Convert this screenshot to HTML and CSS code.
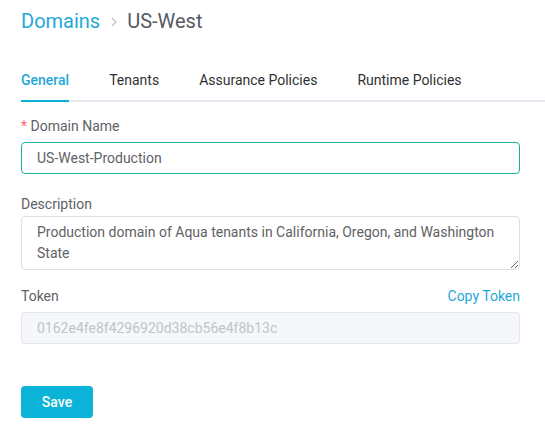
FILE: index.html
```html
<!DOCTYPE html>
<html>
<head>
<meta charset="utf-8">
<link rel="stylesheet" href="styles.css">
</head>
<body>
<div class="page">
  <div class="crumbs">
    <span class="crumb-link">Domains</span>
    <svg class="chev" width="8" height="12" viewBox="0 0 8 12"><path d="M2 2 L6 6 L2 10" fill="none" stroke="#c0c4cc" stroke-width="1.3"/></svg>
    <span class="crumb-cur">US-West</span>
  </div>
  <div class="tabs">
    <div class="tab active">General</div>
    <div class="tab">Tenants</div>
    <div class="tab">Assurance Policies</div>
    <div class="tab">Runtime Policies</div>
  </div>
  <div class="form">
    <div class="field">
      <div class="label"><span class="req">*</span> Domain Name</div>
      <div class="input focus">US-West-Production</div>
    </div>
    <div class="field desc">
      <div class="label tight">Description</div>
      <textarea class="textarea">Production domain of Aqua tenants in California, Oregon, and Washington State</textarea>
    </div>
    <div class="field">
      <div class="label row"><span>Token</span><span class="link">Copy Token</span></div>
      <div class="input disabled">0162e4fe8f4296920d38cb56e4f8b13c</div>
    </div>
    <div class="actions">
      <button class="btn">Save</button>
    </div>
  </div>
</div>
</body>
</html>
```
FILE: styles.css
```css
* { box-sizing: border-box; }
html, body { margin: 0; padding: 0; background: #fff; }
body { font-family: Roboto, "Noto Sans", sans-serif; color: #606266; }
.page { padding: 8px 0 0 21px; }
.crumbs { display: flex; align-items: center; height: 26px; font-size: 20px; }
.crumb-link { color: #1fa8d7; }
.chev { margin: 2px 9px 0 10px; }
.crumb-cur { color: #555a64; }
.tabs { display: flex; margin-top: 34px; border-bottom: 2px solid #e4e7ed; gap: 40px; font-size: 14px; color: #303133; }
.tab { height: 34px; line-height: 24px; margin-bottom: -2px; }
.tab.active { color: #1fa8d7; font-weight: 500; border-bottom: 2px solid #0db1d8; }
.form { width: 499px; margin-top: 14px; }
.field { margin-bottom: 20px; }
.field.desc { margin-bottom: 16px; }
.label { font-size: 14px; color: #606266; line-height: 20px; margin-bottom: 6px; }
.label.tight { margin-bottom: 2px; }
.label.row { display: flex; justify-content: space-between; }
.req { color: #f56c6c; }
.link { color: #1fa8d7; }
.input { height: 32px; border: 1px solid #dcdfe6; border-radius: 4px; padding: 0 15px; font-size: 14px; line-height: 30px; color: #606266; }
.input.focus { border-color: #17b39e; }
.input.disabled { background: #f5f7fa; border-color: #e4e7ed; color: #c0c4cc; }
.textarea { display: block; width: 100%; height: 54px; margin: 0; border: 1px solid #dcdfe6; border-radius: 4px; padding: 5px 15px; font-family: Roboto, "Noto Sans", sans-serif; font-size: 14px; line-height: 21px; color: #606266; resize: vertical; }
.actions { margin-top: 42px; }
.btn { display: block; width: 72px; height: 32px; border: 0; border-radius: 4px; background: #0bb3d8; color: #fff; font-family: Roboto, "Noto Sans", sans-serif; font-size: 14px; font-weight: 500; padding: 0; }
```
